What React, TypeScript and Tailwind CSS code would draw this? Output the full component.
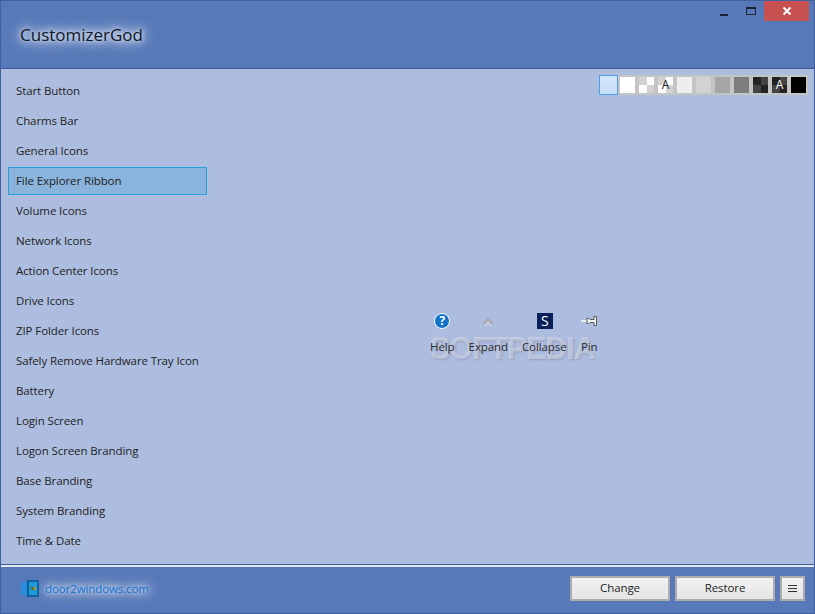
const items = [
  "Start Button",
  "Charms Bar",
  "General Icons",
  "File Explorer Ribbon",
  "Volume Icons",
  "Network Icons",
  "Action Center Icons",
  "Drive Icons",
  "ZIP Folder Icons",
  "Safely Remove Hardware Tray Icon",
  "Battery",
  "Login Screen",
  "Logon Screen Branding",
  "Base Branding",
  "System Branding",
  "Time & Date",
];

const font = { fontFamily: '"Open Sans", "Noto Sans", sans-serif' };

function Checker({ a, b, label }: { a: string; b: string; label?: string }) {
  return (
    <div className="relative grid h-full w-full grid-cols-2 grid-rows-2">
      <div style={{ background: a }} />
      <div style={{ background: b }} />
      <div style={{ background: b }} />
      <div style={{ background: a }} />
      {label && (
        <span
          className={`absolute inset-0 flex items-center justify-center text-[12px] leading-none ${
            b === "#ffffff" ? "text-[#222]" : "text-white"
          }`}
        >
          {label}
        </span>
      )}
    </div>
  );
}

function Swatches() {
  const cell = "h-[20px] w-[19px] border-2 border-[#c4c4c4]";
  return (
    <div className="flex justify-end pt-[6px] pr-[6px]">
      <div className="h-[20px] w-[19px] border border-[#4f9de8] bg-gradient-to-b from-[#d3e6fb] to-[#c9dff8]" />
      <div className={`${cell} bg-white`} />
      <div className={cell}>
        <Checker a="#d2d2d2" b="#ffffff" />
      </div>
      <div className={cell}>
        <Checker a="#d2d2d2" b="#ffffff" label="A" />
      </div>
      <div className={`${cell} bg-[#eeeeee]`} />
      <div className={`${cell} bg-[#d2d2d2]`} />
      <div className={`${cell} bg-[#a6a6a6]`} />
      <div className={`${cell} bg-[#7d7d7d]`} />
      <div className={cell}>
        <Checker a="#222222" b="#444444" />
      </div>
      <div className={cell}>
        <Checker a="#222222" b="#444444" label="A" />
      </div>
      <div className={`${cell} bg-black`} />
    </div>
  );
}

function HelpIcon() {
  return (
    <div className="flex h-[16px] w-[16px] items-center justify-center rounded-full border border-white bg-[#1273c9] text-[12px] leading-none font-bold text-white">
      ?
    </div>
  );
}

function ExpandIcon() {
  return (
    <svg width="14" height="12" viewBox="0 0 14 12">
      <path d="M2.5 9 L7 4.5 L11.5 9" fill="none" stroke="#a9a9ad" strokeWidth="2.4" />
      <path d="M4 10.5 L7 7.5 L10 10.5" fill="none" stroke="#f1f1f3" strokeWidth="1" />
    </svg>
  );
}

function CollapseIcon() {
  return (
    <div className="ml-[1px] flex h-[16px] w-[16px] items-center justify-center bg-[#0a2158] text-[14px] leading-none text-white">
      S
    </div>
  );
}

function PinIcon() {
  return (
    <svg width="16" height="12" viewBox="0 0 16 12">
      <path d="M0 6 H6" stroke="#ffffff" strokeWidth="1.4" />
      <path d="M6 3.5 H8 L9 4.5 H13 V1.5 H15.5 V10.5 H13 V7.5 H9 L8 8.5 H6 Z" fill="#f4f4f4" stroke="#55595f" strokeWidth="1" />
    </svg>
  );
}

function RibbonIcons() {
  const cols = [
    { label: "Help", icon: <HelpIcon />, w: "w-[25px]" },
    { label: "Expand", icon: <ExpandIcon />, w: "w-[38px]" },
    { label: "Collapse", icon: <CollapseIcon />, w: "w-[45px]" },
    { label: "Pin", icon: <PinIcon />, w: "w-[16px]" },
  ];
  return (
    <div className="relative flex gap-[14.5px]">
      <span
        className="absolute top-[17px] left-[0px] text-[31px] leading-[38px] font-bold tracking-[-1.4px] whitespace-nowrap text-white/35 [text-shadow:1px_1px_2px_rgba(90,100,130,0.3)]"
        style={{ fontFamily: '"Liberation Sans", sans-serif' }}
      >
        SOFTPEDIA
      </span>
      {cols.map((c) => (
        <div key={c.label} className={`relative flex flex-col items-center ${c.w}`}>
          <div className="flex h-[16px] items-center justify-center">{c.icon}</div>
          <span className="mt-[9px] leading-[18px] whitespace-nowrap text-[#2a2a2e]">{c.label}</span>
        </div>
      ))}
    </div>
  );
}

export default function App() {
  return (
    <div
      className="flex h-[614px] w-[815px] flex-col border border-[#40609f] bg-[#5879b9] text-[11.5px] tracking-[-0.1px] text-[#1e1e24]"
      style={font}
    >
      {/* title bar */}
      <div className="flex h-[68px] shrink-0 justify-between border-b border-[#3d5b94]">
        <div className="pt-[20px] pl-[19px]">
          <span className="text-[17px] leading-[27px] tracking-normal text-[#101828] [text-shadow:0_0_4px_#dfe7f5,0_0_8px_#dfe7f5,0_0_12px_#dfe7f5,0_0_18px_#dfe7f5]">
            CustomizerGod
          </span>
        </div>
        <div className="flex items-start">
          <div className="mt-[13px] mr-[18px] h-[2px] w-[8px] bg-[#1c2434]" />
          <div className="mt-[6px] mr-[8px] h-[8px] w-[10px] border border-t-2 border-[#1c2434]" />
          <div className="mr-[5px] flex h-[20px] w-[45px] items-center justify-center bg-[#c75050]">
            <svg width="10" height="10" viewBox="0 0 10 10">
              <path d="M1.5 1.5 L8.5 8.5 M8.5 1.5 L1.5 8.5" stroke="#ffffff" strokeWidth="2" />
            </svg>
          </div>
        </div>
      </div>

      {/* body */}
      <div className="flex min-h-0 flex-1 bg-[#adbddf]">
        <div className="flex w-[212px] shrink-0 flex-col gap-[2px] pt-[8px] pl-[7px]">
          {items.map((item) => (
            <div
              key={item}
              className={`flex h-[28px] w-[199px] items-center border pl-[7px] whitespace-nowrap ${
                item === "File Explorer Ribbon"
                  ? "border-[#26a0da] bg-[#8ab4dc]"
                  : "border-transparent"
              }`}
            >
              {item}
            </div>
          ))}
        </div>
        <div className="flex min-w-0 flex-1 flex-col">
          <Swatches />
          <div className="flex flex-1 items-center justify-center pt-[8px]">
            <RibbonIcons />
          </div>
        </div>
      </div>

      {/* footer */}
      <div className="flex h-[48px] shrink-0 items-center justify-between border-t-2 border-[#e3e9f4] pr-[9px] pb-[4px] pl-[19px] shadow-[0_-1px_0_#3d5b94]">
        <div className="mt-[2px] flex items-center gap-[5px]">
          <svg width="20" height="20" viewBox="0 0 20 20">
            <path d="M1 4 L7 2 V18 L1 15 Z" fill="#2b8bdc" />
            <rect x="7" y="1" width="12" height="17" fill="#0f5f9f" />
            <rect x="9" y="3" width="8" height="13" fill="#1b9bd8" />
            <rect x="11" y="8" width="3" height="3" fill="#5a6b3c" />
            <rect x="14" y="8" width="2" height="3" fill="#b09030" />
          </svg>
          <span className="leading-[18px] text-[#0f6fd1] [text-shadow:0_0_4px_#dfe7f5,0_0_8px_#dfe7f5,0_0_12px_#dfe7f5,0_0_18px_#dfe7f5]">
            door2windows.com
          </span>
        </div>
        <div className="flex items-center gap-[5px]">
          <button className="h-[25px] w-[100px] border-2 border-[#adadad] bg-gradient-to-b from-[#f2f2f2] to-[#e5e5e5]">
            Change
          </button>
          <button className="h-[25px] w-[100px] border-2 border-[#adadad] bg-gradient-to-b from-[#f2f2f2] to-[#e5e5e5]">
            Restore
          </button>
          <button className="flex h-[25px] w-[25px] flex-col items-center justify-center gap-[2px] border-2 border-[#adadad] bg-gradient-to-b from-[#f2f2f2] to-[#e5e5e5]">
            <span className="h-px w-[9px] bg-[#333]" />
            <span className="h-px w-[9px] bg-[#333]" />
            <span className="h-px w-[9px] bg-[#333]" />
          </button>
        </div>
      </div>
    </div>
  );
}
